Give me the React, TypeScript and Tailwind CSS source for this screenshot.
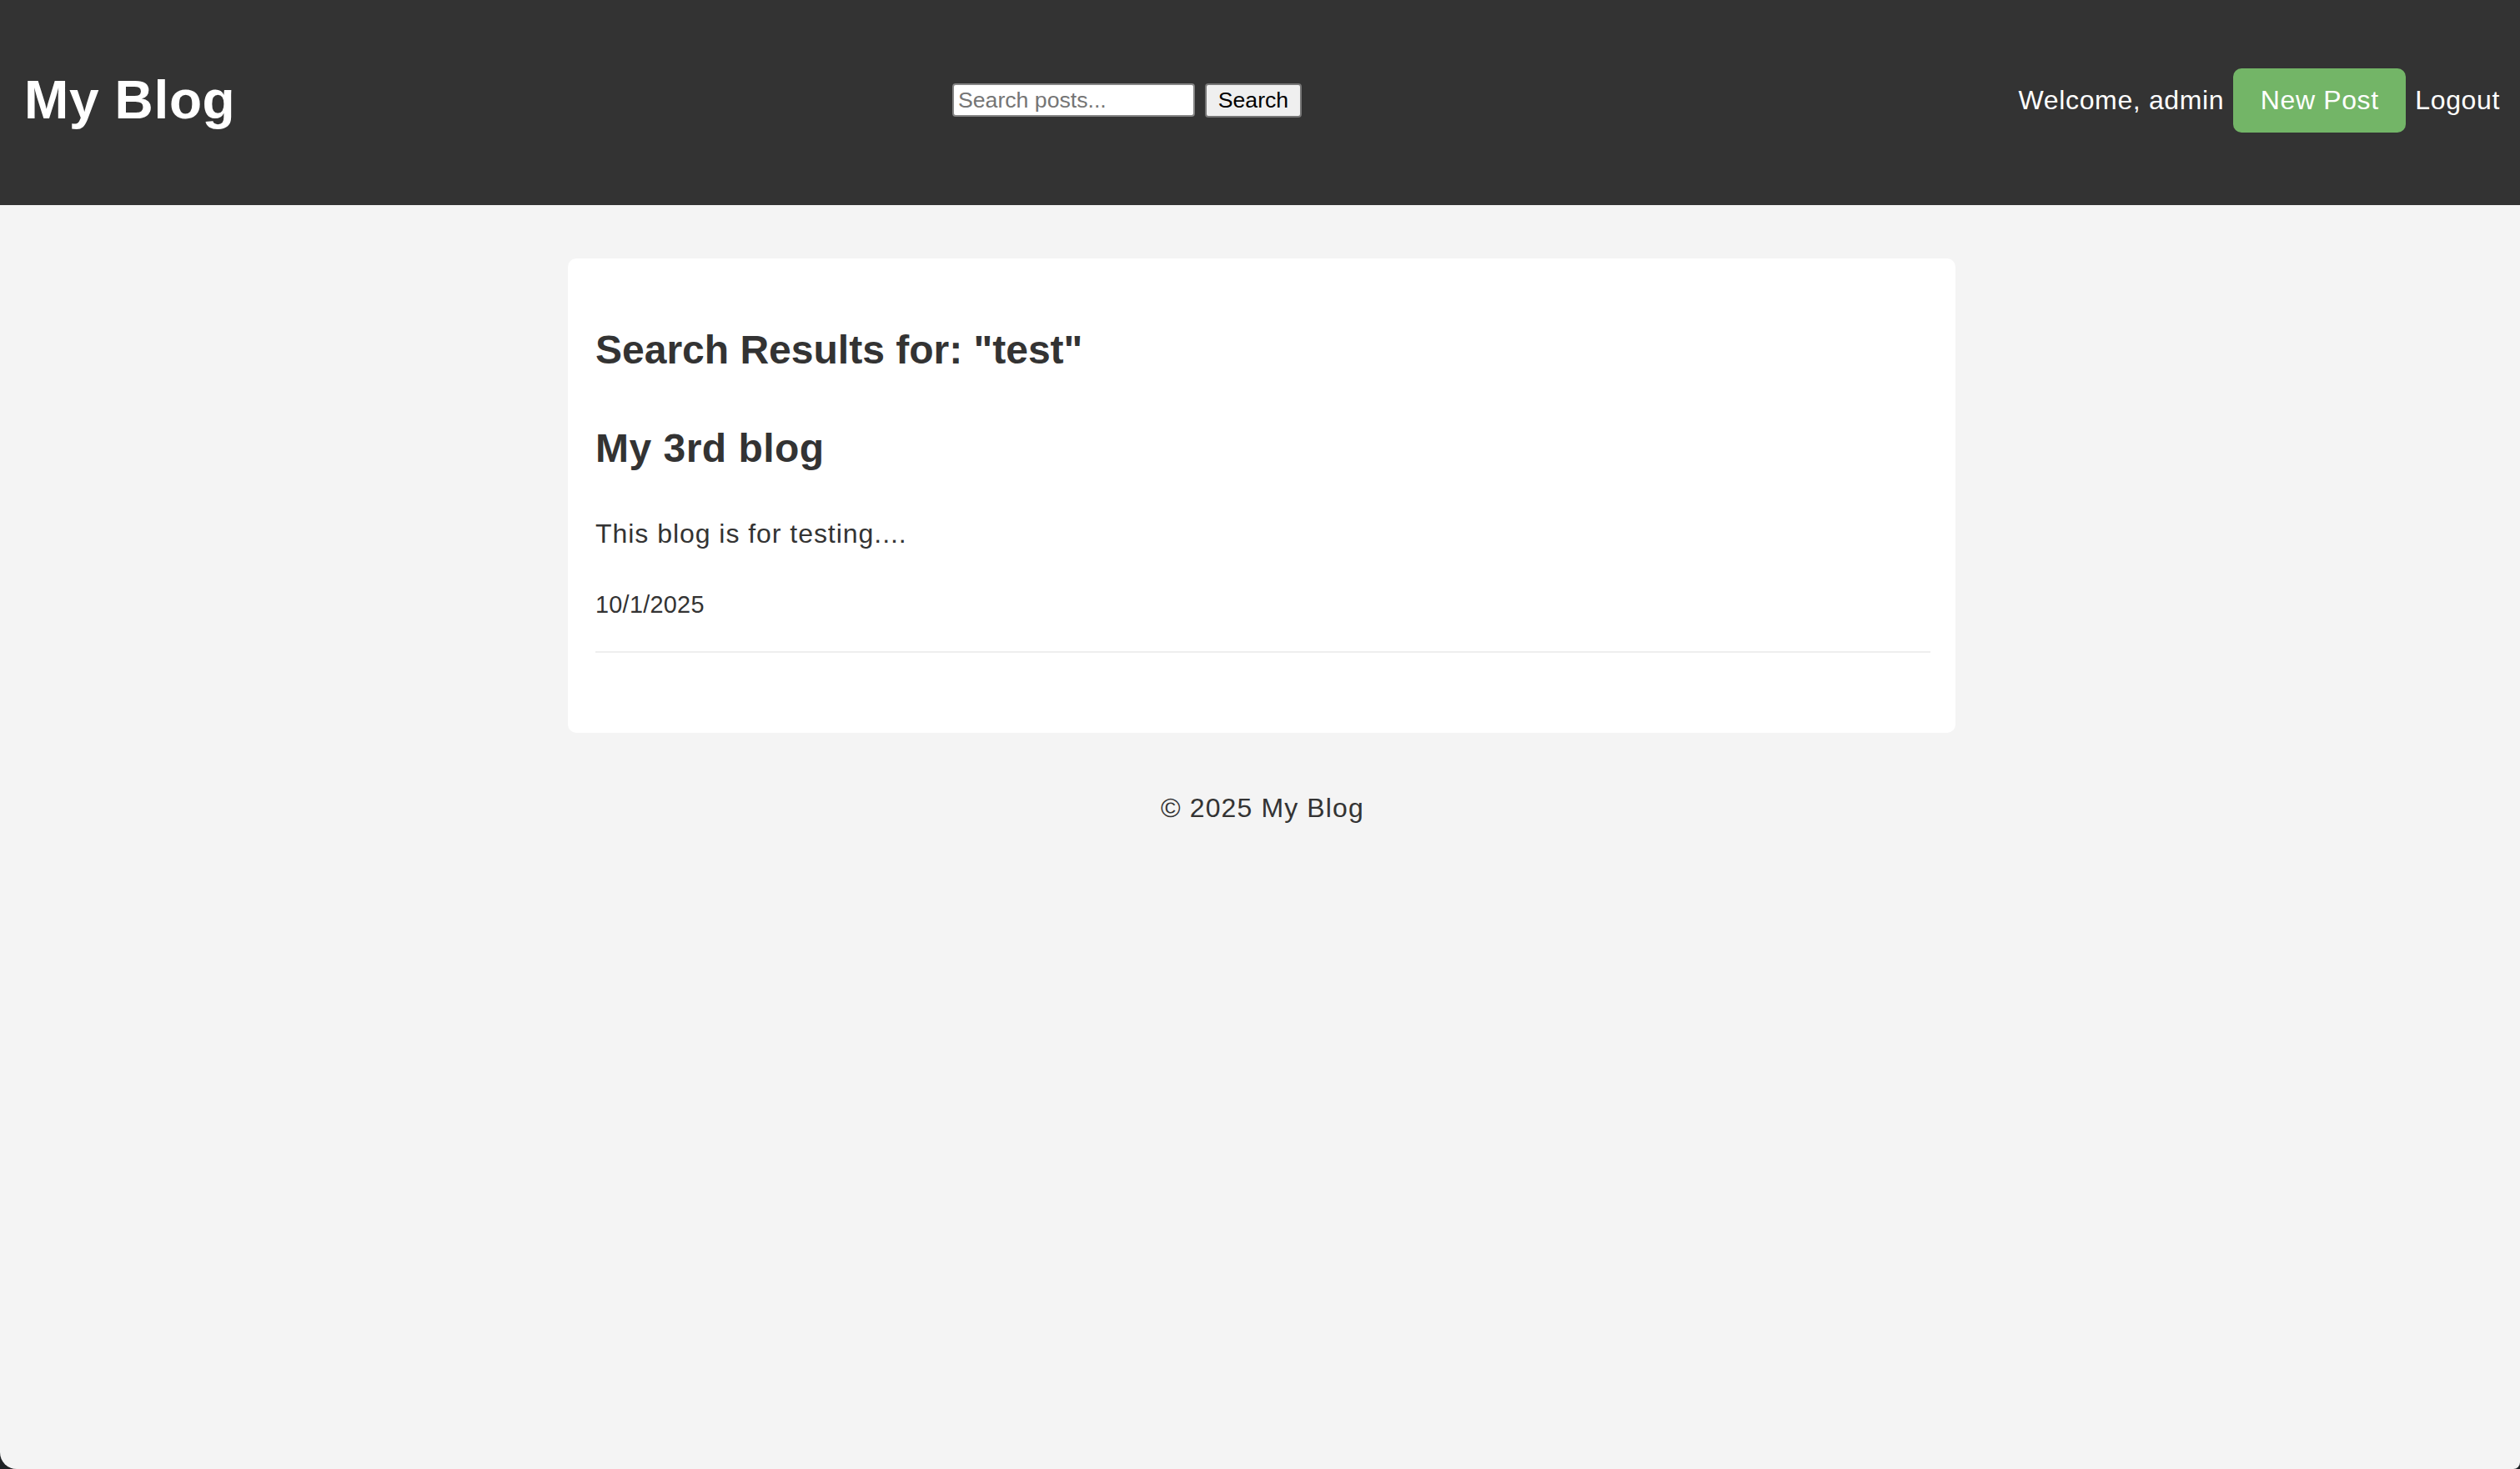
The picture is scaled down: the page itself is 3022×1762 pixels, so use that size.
import React from "react";

const posts = [
  {
    title: "My 3rd blog",
    excerpt: "This blog is for testing....",
    date: "10/1/2025",
  },
];

export default function App() {
  return (
    <div className="h-screen bg-[#1f2225]">
      <div className="h-full bg-[#f4f4f4] rounded-bl-[20px] rounded-br-[8px] overflow-hidden flex flex-col font-['Liberation_Sans',Arial,sans-serif] text-[#333]">
        {/* header */}
        <header className="h-[246px] shrink-0 bg-[#333] text-white flex items-center justify-between pl-[29px] pr-[24px] pb-[6px]">
          <h1 className="text-[64px] font-bold leading-none tracking-[0.01em]">My Blog</h1>
          <form className="flex items-center gap-[12px]" onSubmit={(e) => e.preventDefault()}>
            <input
              type="text"
              placeholder="Search posts..."
              className="w-[291px] h-[40px] border-2 border-[#858585] rounded-[4px] bg-white px-[5px] text-[26.67px] text-black placeholder:text-[#757575] outline-none"
            />
            <button
              type="submit"
              className="w-[116px] h-[41px] border-2 border-[#767676] rounded-[4px] bg-[#efefef] text-[26.67px] text-black leading-none"
            >
              Search
            </button>
          </form>
          <nav className="flex items-center gap-[11px] text-[32px] tracking-[0.02em]">
            <span>Welcome, admin</span>
            <a className="w-[207px] h-[77px] rounded-[10px] bg-[#73b567] flex items-center justify-center">
              New Post
            </a>
            <a>Logout</a>
          </nav>
        </header>

        {/* results */}
        <main className="w-[1664px] mx-auto mt-[64px] bg-white rounded-[10px] pl-[33px] pr-[30px] pt-[82px] pb-[96px] translate-x-[2px]">
          <h2 className="text-[48px] font-bold leading-[56px]">Search Results for: "test"</h2>
          {posts.map((post, i) => (
            <div key={i} className="mt-[62px] border-b-2 border-[#eeeeee] pb-[39px]">
              <h3 className="text-[48px] font-bold leading-[56px] tracking-[0.01em]">{post.title}</h3>
              <p className="mt-[56px] text-[32px] leading-[37px] tracking-[0.03em]">{post.excerpt}</p>
              <p className="mt-[50px] text-[28.8px] leading-[33px] tracking-[0.01em]">{post.date}</p>
            </div>
          ))}
        </main>

        <footer className="mt-[72px] text-center text-[32px] leading-[37px] tracking-[0.035em] translate-x-[3px]">
          © 2025 My Blog
        </footer>
      </div>
    </div>
  );
}
